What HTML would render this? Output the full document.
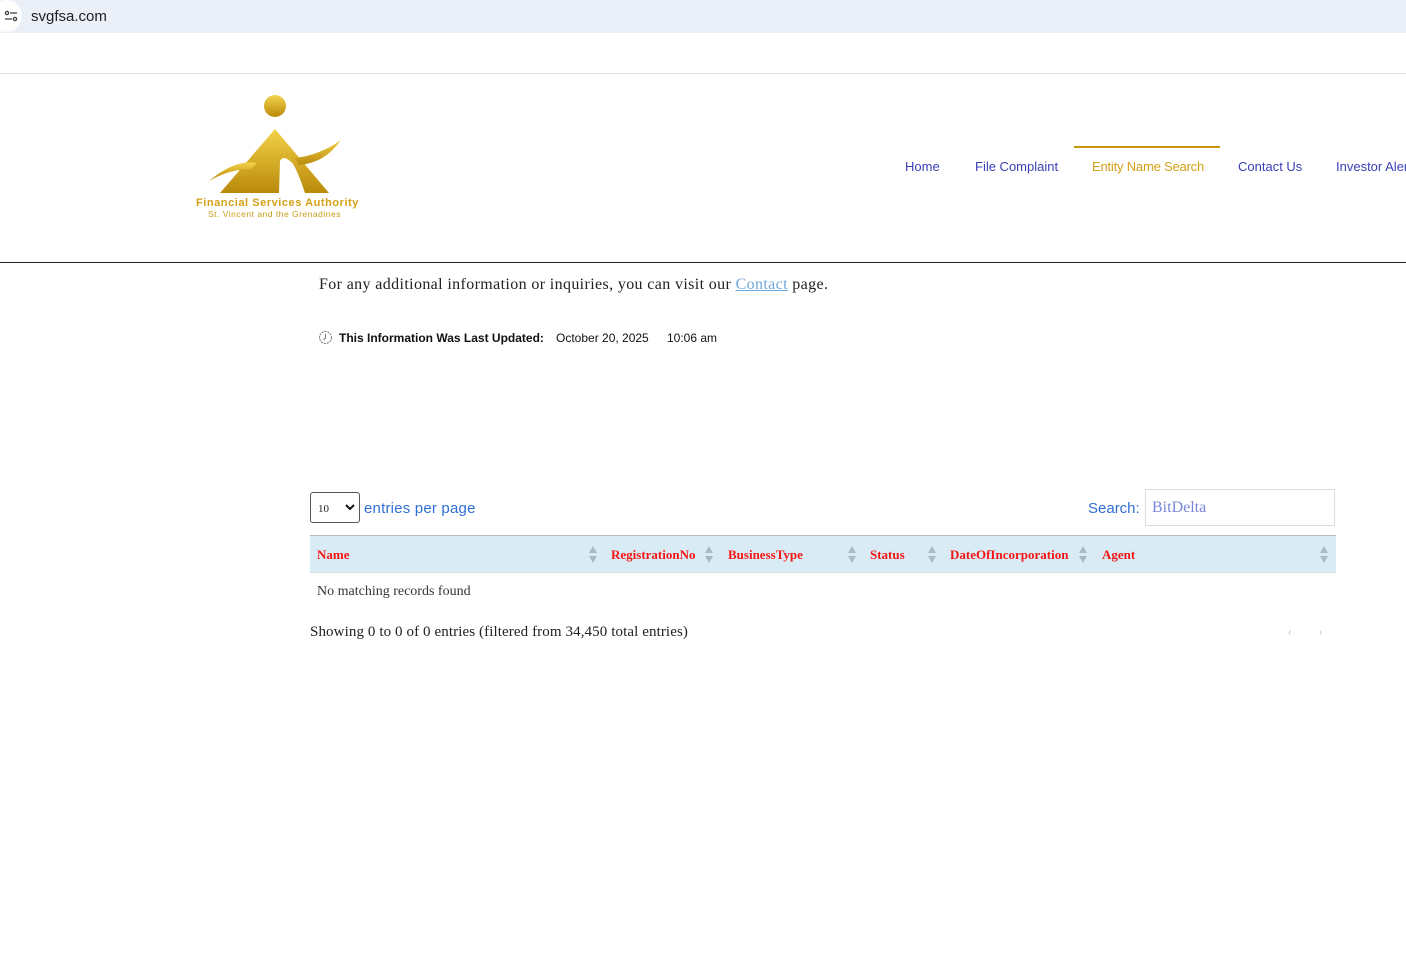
<!DOCTYPE html>
<html><head><meta charset="utf-8"><style>
body{margin:0;width:1406px;height:970px;background:#fff;position:relative;overflow:hidden;font-family:"Liberation Sans",sans-serif}
.a{position:absolute;white-space:nowrap}
.serif{font-family:"Liberation Serif",serif}
.nav{font-size:13px;color:#3a3fb5;top:159px}
.arr{position:absolute;top:546px;width:8px;height:18px}
</style></head><body>
<div class="a" style="left:0;top:0;width:1406px;height:33px;background:#eaeff8"></div>
<div class="a" style="left:-10px;top:0;width:32px;height:32px;border-radius:16px;background:#fff"></div>
<svg class="a" style="left:4px;top:9px" width="14" height="14" viewBox="0 0 14 14" fill="none" stroke="#444" stroke-width="1.3"><circle cx="3" cy="4" r="1.6"/><line x1="6" y1="4" x2="13" y2="4"/><line x1="1" y1="10" x2="8" y2="10"/><circle cx="11" cy="10" r="1.6"/></svg>
<div class="a" style="left:31px;top:8px;font-size:15px;color:#1f1f1f">svgfsa.com</div>
<div class="a" style="left:0;top:73px;width:1406px;height:1px;background:#e2e2e2"></div>
<svg class="a" style="left:195px;top:93px" width="165" height="100" viewBox="0 0 165 100">
<defs><linearGradient id="g" x1="0" y1="0" x2="0" y2="1"><stop offset="0" stop-color="#f3d24a"/><stop offset="1" stop-color="#b98a0a"/></linearGradient></defs>
<circle cx="80" cy="13" r="11" fill="url(#g)"/>
<path d="M80 36 L134 100 L110 100 Q100 70 95 68 Q88 62 85 68 L84 100 L25 100 Z" fill="url(#g)"/>
<path d="M14 88 Q40 66 62 70 L56 76 Q35 76 14 88 Z" fill="url(#g)"/>
<path d="M100 65 Q125 62 146 47 Q130 70 104 72 Z" fill="url(#g)"/>
</svg>
<div class="a" style="left:196px;top:197px;font-size:11px;font-weight:bold;color:#d4a017;letter-spacing:0.55px">Financial Services Authority</div>
<div class="a" style="left:208px;top:209px;font-size:8.5px;color:#c99a12;letter-spacing:0.5px">St. Vincent and the Grenadines</div>
<div class="a nav" style="left:905px">Home</div>
<div class="a nav" style="left:975px">File Complaint</div>
<div class="a" style="left:1074px;top:146px;width:146px;height:2px;background:#c9960a"></div>
<div class="a nav" style="left:1092px;color:#d4a017;letter-spacing:-0.2px">Entity Name Search</div>
<div class="a nav" style="left:1238px">Contact Us</div>
<div class="a nav" style="left:1336px">Investor Alerts</div>
<div class="a" style="left:0;top:262px;width:1406px;height:1px;background:#222"></div>
<div class="a serif" style="left:319px;top:276px;font-size:16px;color:#222;letter-spacing:0.37px">For any additional information or inquiries, you can visit our <span style="color:#6ea8dc;text-decoration:underline">Contact</span> page.</div>
<svg class="a" style="left:318px;top:330px" width="15" height="15" viewBox="0 0 15 15" fill="none" stroke="#777" stroke-width="1"><circle cx="7.5" cy="7.5" r="6" stroke-dasharray="2 1"/><path d="M7.5 4v4l-2 2"/></svg>
<div class="a" style="left:339px;top:331px;font-size:12px;font-weight:bold;color:#111">This Information Was Last Updated:</div>
<div class="a" style="left:556px;top:331px;font-size:12px;color:#111">October 20, 2025</div>
<div class="a" style="left:667px;top:331px;font-size:12px;color:#111">10:06 am</div>
<div class="a" style="left:310px;top:492px;width:48px;height:29px;border:1px solid #555;border-radius:3px"></div>
<div class="a serif" style="left:318px;top:503px;font-size:11px;color:#222">10</div>
<svg class="a" style="left:345px;top:503px" width="10" height="8" viewBox="0 0 10 8"><path d="M1 2l4 4 4-4" fill="none" stroke="#111" stroke-width="2"/></svg>
<div class="a" style="left:364px;top:500px;font-size:15px;color:#2f6fd6;letter-spacing:0.2px">entries per page</div>
<div class="a" style="left:1088px;top:500px;font-size:15px;color:#2f6fd6">Search:</div>
<div class="a" style="left:1145px;top:489px;width:188px;height:35px;border:1px solid #ddd"></div>
<div class="a serif" style="left:1152px;top:499px;font-size:16px;color:#7a86d8">BitDelta</div>
<div class="a" style="left:310px;top:535px;width:1026px;height:36px;background:#d9ecf5;border-top:1px solid #bbb;border-bottom:1px solid #ddd"></div>
<div class="a serif" style="top:547px;font-size:13px;font-weight:bold;color:#f41515;left:317px">Name</div>
<div class="a serif" style="top:547px;font-size:13px;font-weight:bold;color:#f41515;left:611px">RegistrationNo</div>
<div class="a serif" style="top:547px;font-size:13px;font-weight:bold;color:#f41515;left:728px">BusinessType</div>
<div class="a serif" style="top:547px;font-size:13px;font-weight:bold;color:#f41515;left:870px">Status</div>
<div class="a serif" style="top:547px;font-size:13px;font-weight:bold;color:#f41515;left:950px">DateOfIncorporation</div>
<div class="a serif" style="top:547px;font-size:13px;font-weight:bold;color:#f41515;left:1102px">Agent</div>
<svg width="0" height="0" style="position:absolute"><defs><g id="s"><path d="M4 0L8 7H0Z M0 10H8L4 17Z" fill="#a9bac4"/></g></defs></svg>
<svg class="arr" style="left:589px"><use href="#s"/></svg>
<svg class="arr" style="left:705px"><use href="#s"/></svg>
<svg class="arr" style="left:848px"><use href="#s"/></svg>
<svg class="arr" style="left:928px"><use href="#s"/></svg>
<svg class="arr" style="left:1079px"><use href="#s"/></svg>
<svg class="arr" style="left:1320px"><use href="#s"/></svg>
<div class="a serif" style="left:317px;top:584px;font-size:14px;color:#333">No matching records found</div>
<div class="a serif" style="left:310px;top:624px;font-size:15px;color:#222;letter-spacing:0.1px">Showing 0 to 0 of 0 entries (filtered from 34,450 total entries)</div>
<div class="a" style="left:1288px;top:627px;font-size:10px;color:#bbb">‹</div>
<div class="a" style="left:1319px;top:627px;font-size:10px;color:#bbb">›</div>
</body></html>
